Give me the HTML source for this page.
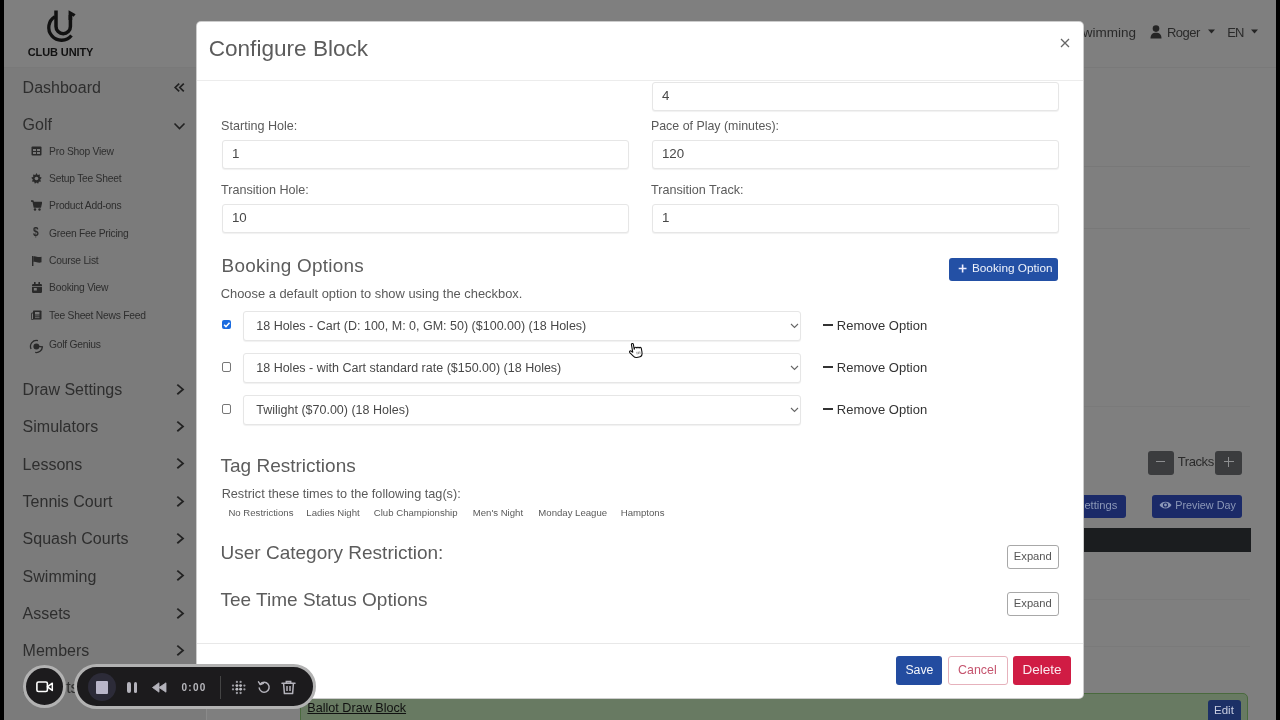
<!DOCTYPE html>
<html><head><meta charset="utf-8"><title>Configure Block</title><style>
html,body{margin:0;padding:0;width:1280px;height:720px;overflow:hidden;background:#000}
body{position:relative;font-family:"Liberation Sans",sans-serif}
.t{position:absolute;white-space:pre}
.r{position:absolute}
#root{position:absolute;left:0;top:0;width:1280px;height:720px;overflow:hidden;will-change:transform}
.inp{border:1px solid #e6e6e6;border-radius:3px;background:#fff;box-shadow:0 1px 1px rgba(0,0,0,.06)}
</style></head><body><div id="root">
<div class="r" style="left:4px;top:0;width:1272px;height:720px;background:#7f7f7f"></div>
<div class="r" style="left:4px;top:67px;width:1272px;height:1px;background:#797979"></div>
<div class="r" style="left:4px;top:68px;width:202px;height:652px;background:#7b7b7b"></div>
<div class="r" style="left:206px;top:68px;width:1px;height:652px;background:#777"></div>
<svg class="r" style="left:40px;top:5px" width="40" height="40" viewBox="40 5 40 40">
<path d="M54.93 16.57 A12.75 12.75 0 1 0 71.48 35.44" fill="none" stroke="#111" stroke-width="3.3"/>
<path d="M56 10.6 V26.5 A7.2 7.2 0 0 0 70.4 26.5 V15" fill="none" stroke="#111" stroke-width="3.5"/>
<path d="M68.6 10.3 L75.6 14.2 L73.6 16.8 L72.2 15.8 L72.2 20 L68.6 20 Z" fill="#111"/>
</svg>
<div class="t" style="left:27.75px;top:47.09px;font-size:11px;line-height:11px;color:#111;font-weight:700;letter-spacing:-0.1px">CLUB UNITY</div>
<div class="t" style="left:22.60px;top:80.15px;font-size:16px;line-height:16px;color:#2e2e2e;">Dashboard</div>
<div class="t" style="left:22.60px;top:117.15px;font-size:16px;line-height:16px;color:#2e2e2e;">Golf</div>
<svg class="r" style="left:173px;top:82px" width="13" height="11" viewBox="0 0 13 11">
<path d="M6.2 1.6 L2.2 5.5 L6.2 9.4 M10.8 1.6 L6.8 5.5 L10.8 9.4" fill="none" stroke="#222" stroke-width="1.7"/></svg>
<svg class="r" style="left:173px;top:121px" width="13" height="10" viewBox="0 0 13 10">
<path d="M1.5 2.5 L6.5 7.5 L11.5 2.5" fill="none" stroke="#222" stroke-width="1.6"/></svg>
<div class="t" style="left:49.09px;top:146.58px;font-size:10.3px;line-height:10.3px;color:#2e2e2e;letter-spacing:-0.25px">Pro Shop View</div>
<div class="t" style="left:49.09px;top:173.93px;font-size:10.3px;line-height:10.3px;color:#2e2e2e;letter-spacing:-0.25px">Setup Tee Sheet</div>
<div class="t" style="left:49.09px;top:201.28px;font-size:10.3px;line-height:10.3px;color:#2e2e2e;letter-spacing:-0.25px">Product Add-ons</div>
<div class="t" style="left:49.09px;top:228.63px;font-size:10.3px;line-height:10.3px;color:#2e2e2e;letter-spacing:-0.25px">Green Fee Pricing</div>
<div class="t" style="left:49.09px;top:255.98px;font-size:10.3px;line-height:10.3px;color:#2e2e2e;letter-spacing:-0.25px">Course List</div>
<div class="t" style="left:49.09px;top:283.33px;font-size:10.3px;line-height:10.3px;color:#2e2e2e;letter-spacing:-0.25px">Booking View</div>
<div class="t" style="left:49.09px;top:310.68px;font-size:10.3px;line-height:10.3px;color:#2e2e2e;letter-spacing:-0.25px">Tee Sheet News Feed</div>
<div class="t" style="left:49.09px;top:340.48px;font-size:10.3px;line-height:10.3px;color:#2e2e2e;letter-spacing:-0.25px">Golf Genius</div>
<svg class="r" style="left:31px;top:146px" width="11" height="10" viewBox="0 0 11 10"><rect x="0.5" y="0.5" width="10" height="9" rx="1" fill="#2a2a2a"/><rect x="2" y="3" width="3" height="2" fill="#7b7b7b"/><rect x="6" y="3" width="3" height="2" fill="#7b7b7b"/><rect x="2" y="6" width="3" height="2" fill="#7b7b7b"/><rect x="6" y="6" width="3" height="2" fill="#7b7b7b"/></svg>
<svg class="r" style="left:31px;top:173px" width="11" height="11" viewBox="0 0 24 24"><path fill="#2a2a2a" d="M12 0 L14.5 4.2 L19.5 3.2 L19 8 L23.5 10.5 L20 14 L22 18.5 L17.2 19 L15.5 23.5 L12 20.5 L8.5 23.5 L6.8 19 L2 18.5 L4 14 L0.5 10.5 L5 8 L4.5 3.2 L9.5 4.2 Z"/><circle cx="12" cy="12" r="4" fill="#7b7b7b"/></svg>
<svg class="r" style="left:31px;top:200px" width="11" height="11" viewBox="0 0 11 11"><path d="M0 1 H2 L3.2 7 H9.5 L10.5 2.5 H2.5" fill="#2a2a2a" stroke="#2a2a2a" stroke-width="1.3" stroke-linejoin="round"/><circle cx="4" cy="9.5" r="1.2" fill="#2a2a2a"/><circle cx="8.5" cy="9.5" r="1.2" fill="#2a2a2a"/></svg>
<div class="t" style="left:33.40px;top:226.34px;font-size:12px;line-height:12px;color:#2a2a2a;font-weight:700;transform:scaleX(.85);transform-origin:0 0">$</div>
<svg class="r" style="left:32px;top:256px" width="10" height="10" viewBox="0 0 10 10"><path d="M0.7 0 V10" stroke="#2a2a2a" stroke-width="1.4"/><path d="M1.4 0.5 C4 -0.5 5.5 2 9.5 0.7 V6.3 C5.5 7.5 4 5 1.4 6 Z" fill="#2a2a2a"/></svg>
<svg class="r" style="left:32px;top:282px" width="10" height="11" viewBox="0 0 10 11"><rect x="0" y="2" width="10" height="9" rx="1.2" fill="#2a2a2a"/><rect x="2" y="0" width="1.6" height="3" fill="#2a2a2a"/><rect x="6.4" y="0" width="1.6" height="3" fill="#2a2a2a"/><rect x="0" y="4" width="10" height="0.8" fill="#7b7b7b"/><rect x="1.8" y="6" width="3" height="2.5" fill="#7b7b7b"/></svg>
<svg class="r" style="left:31px;top:310px" width="11" height="10" viewBox="0 0 11 10"><rect x="2" y="0.5" width="8.5" height="9" rx="0.8" fill="#2a2a2a"/><rect x="0.3" y="3" width="2.2" height="6.5" rx="0.8" fill="none" stroke="#2a2a2a" stroke-width="1"/><rect x="4" y="2" width="4.5" height="2.5" fill="#7b7b7b"/><rect x="4" y="5.5" width="4.5" height="0.8" fill="#7b7b7b"/><rect x="4" y="7.3" width="4.5" height="0.8" fill="#7b7b7b"/></svg>
<svg class="r" style="left:26px;top:334px" width="20" height="22" viewBox="26 334 20 22"><path d="M37.95 340.68 A6 6 0 0 0 31.06 349.04" fill="none" stroke="#2a2a2a" stroke-width="1.3"/><circle cx="36.4" cy="346.5" r="3" fill="#2a2a2a"/><path d="M38.5 346.4 L42.4 346.9 A6 6 0 0 1 35.2 352.4" fill="none" stroke="#2a2a2a" stroke-width="1.3"/></svg>
<div class="t" style="left:22.60px;top:382.05px;font-size:16px;line-height:16px;color:#2e2e2e;">Draw Settings</div>
<svg class="r" style="left:175px;top:382.7px" width="10" height="13" viewBox="0 0 10 13"><path d="M2.3 1.6 L8 6.4 L2.3 11.2" fill="none" stroke="#222" stroke-width="1.8"/></svg>
<div class="t" style="left:22.60px;top:419.35px;font-size:16px;line-height:16px;color:#2e2e2e;">Simulators</div>
<svg class="r" style="left:175px;top:420.0px" width="10" height="13" viewBox="0 0 10 13"><path d="M2.3 1.6 L8 6.4 L2.3 11.2" fill="none" stroke="#222" stroke-width="1.8"/></svg>
<div class="t" style="left:22.60px;top:456.65px;font-size:16px;line-height:16px;color:#2e2e2e;">Lessons</div>
<svg class="r" style="left:175px;top:457.3px" width="10" height="13" viewBox="0 0 10 13"><path d="M2.3 1.6 L8 6.4 L2.3 11.2" fill="none" stroke="#222" stroke-width="1.8"/></svg>
<div class="t" style="left:22.60px;top:493.95px;font-size:16px;line-height:16px;color:#2e2e2e;">Tennis Court</div>
<svg class="r" style="left:175px;top:494.6px" width="10" height="13" viewBox="0 0 10 13"><path d="M2.3 1.6 L8 6.4 L2.3 11.2" fill="none" stroke="#222" stroke-width="1.8"/></svg>
<div class="t" style="left:22.60px;top:531.25px;font-size:16px;line-height:16px;color:#2e2e2e;">Squash Courts</div>
<svg class="r" style="left:175px;top:531.9px" width="10" height="13" viewBox="0 0 10 13"><path d="M2.3 1.6 L8 6.4 L2.3 11.2" fill="none" stroke="#222" stroke-width="1.8"/></svg>
<div class="t" style="left:22.60px;top:568.55px;font-size:16px;line-height:16px;color:#2e2e2e;">Swimming</div>
<svg class="r" style="left:175px;top:569.2px" width="10" height="13" viewBox="0 0 10 13"><path d="M2.3 1.6 L8 6.4 L2.3 11.2" fill="none" stroke="#222" stroke-width="1.8"/></svg>
<div class="t" style="left:22.60px;top:605.85px;font-size:16px;line-height:16px;color:#2e2e2e;">Assets</div>
<svg class="r" style="left:175px;top:606.5px" width="10" height="13" viewBox="0 0 10 13"><path d="M2.3 1.6 L8 6.4 L2.3 11.2" fill="none" stroke="#222" stroke-width="1.8"/></svg>
<div class="t" style="left:22.60px;top:643.15px;font-size:16px;line-height:16px;color:#2e2e2e;">Members</div>
<svg class="r" style="left:175px;top:643.8px" width="10" height="13" viewBox="0 0 10 13"><path d="M2.3 1.6 L8 6.4 L2.3 11.2" fill="none" stroke="#222" stroke-width="1.8"/></svg>
<div class="t" style="left:22.60px;top:680.45px;font-size:16px;line-height:16px;color:#2e2e2e;">Reports</div>
<div class="t" style="left:22.60px;top:720.45px;font-size:16px;line-height:16px;color:#2e2e2e;">Settings</div>
<div class="t" style="left:1073.83px;top:26.07px;font-size:13.5px;line-height:13.5px;color:#2a2a2a;">Swimming</div>
<svg class="r" style="left:1150px;top:25px" width="12" height="14" viewBox="0 0 12 14"><circle cx="6" cy="3.6" r="3.3" fill="#252525"/><path d="M0.5 13.5 C0.5 9 3 7.8 6 7.8 C9 7.8 11.5 9 11.5 13.5 Z" fill="#252525"/></svg>
<div class="t" style="left:1166.95px;top:25.99px;font-size:13px;line-height:13px;color:#2a2a2a;letter-spacing:-0.5px">Roger</div>
<svg class="r" style="left:1208px;top:29px" width="7" height="5" viewBox="0 0 7 5"><path d="M0 0.5 H7 L3.5 4.5 Z" fill="#252525"/></svg>
<div class="t" style="left:1227.25px;top:25.99px;font-size:13px;line-height:13px;color:#2a2a2a;letter-spacing:-1px">EN</div>
<svg class="r" style="left:1251px;top:29px" width="7" height="5" viewBox="0 0 7 5"><path d="M0 0.5 H7 L3.5 4.5 Z" fill="#252525"/></svg>
<div class="r" style="left:1083px;top:166px;width:167px;height:1px;background:#787878"></div>
<div class="r" style="left:1083px;top:228px;width:167px;height:1px;background:#787878"></div>
<div class="r" style="left:1083px;top:406px;width:167px;height:1px;background:#7a7a7a"></div>
<div class="r" style="left:1083px;top:599px;width:167px;height:1px;background:#7a7a7a"></div>
<div class="r" style="left:1083px;top:646px;width:167px;height:1px;background:#7a7a7a"></div>
<div class="r" style="left:206px;top:698px;width:1px;height:22px;background:#8a8a8a"></div>
<div class="r" style="left:1148px;top:451px;width:26px;height:24px;background:#3b3c3e;border-radius:3px"></div>
<div class="r" style="left:1156px;top:460.5px;width:9px;height:1.5px;background:#8d8e90"></div>
<div class="t" style="left:1177.65px;top:455.19px;font-size:13px;line-height:13px;color:#2b2b2b;letter-spacing:-0.4px">Tracks</div>
<div class="r" style="left:1215px;top:451px;width:27px;height:24px;background:#3b3c3e;border-radius:3px"></div>
<div class="r" style="left:1223.5px;top:460.5px;width:10px;height:1.5px;background:#8d8e90"></div>
<div class="r" style="left:1227.75px;top:456.5px;width:1.5px;height:10px;background:#8d8e90"></div>
<div class="r" style="left:1040px;top:495px;width:86px;height:23px;background:#1b2a68;border-radius:3px"></div>
<div class="t" style="left:1076.94px;top:499.72px;font-size:11.2px;line-height:11.2px;color:#8c98b8;">Settings</div>
<div class="r" style="left:1152px;top:495px;width:90px;height:23px;background:#1b2a68;border-radius:3px"></div>
<svg class="r" style="left:1159px;top:500px" width="13" height="10" viewBox="0 0 13 10"><path d="M0.5 5 C3 0.5 10 0.5 12.5 5 C10 9.5 3 9.5 0.5 5 Z" fill="#8c98b8"/><circle cx="6.5" cy="5" r="2.6" fill="#1b2a68"/><circle cx="6.5" cy="5" r="1.4" fill="#8c98b8"/></svg>
<div class="t" style="left:1175.26px;top:500.06px;font-size:10.8px;line-height:10.8px;color:#8c98b8;">Preview Day</div>
<div class="r" style="left:1000px;top:528px;width:251px;height:24px;background:#1b1d1f"></div>
<div class="r" style="left:300px;top:692.5px;width:946px;height:40px;background:#687a62;border:1.5px solid #4a6a3e;border-radius:5px"></div>
<div class="t" style="left:307.37px;top:701.73px;font-size:12.6px;line-height:12.6px;color:#111;text-decoration:underline;text-decoration-thickness:1.3px;text-underline-offset:0.6px">Ballot Draw Block</div>
<div class="r" style="left:1208px;top:700px;width:33px;height:30px;background:#1c3066;border-radius:3px"></div>
<div class="t" style="left:1214.02px;top:705.16px;font-size:11.5px;line-height:11.5px;color:#c8cde0;">Edit</div>
<div class="r" style="left:196px;top:21px;width:886px;height:676px;background:#fff;border:1px solid rgba(0,0,0,.2);border-radius:5px"></div>
<div class="t" style="left:208.67px;top:37.86px;font-size:22.6px;line-height:22.6px;color:#5c5c5c;">Configure Block</div>
<svg class="r" style="left:1060px;top:38px" width="10" height="10" viewBox="0 0 10 10"><path d="M1 1 L9 9 M9 1 L1 9" stroke="#666" stroke-width="1.3"/></svg>
<div class="r" style="left:197px;top:80px;width:886px;height:1px;background:#ececec"></div>
<div class="r inp" style="left:652px;top:82px;width:405px;height:27px"></div>
<div class="t" style="left:661.94px;top:89.44px;font-size:13.3px;line-height:13.3px;color:#484848;">4</div>
<div class="t" style="left:221.07px;top:119.53px;font-size:12.6px;line-height:12.6px;color:#5a5a5a;">Starting Hole:</div>
<div class="t" style="left:650.98px;top:119.70px;font-size:12.4px;line-height:12.4px;color:#5a5a5a;">Pace of Play (minutes):</div>
<div class="r inp" style="left:222px;top:140px;width:405px;height:27px"></div>
<div class="t" style="left:231.94px;top:147.44px;font-size:13.3px;line-height:13.3px;color:#484848;">1</div>
<div class="r inp" style="left:652px;top:140px;width:405px;height:27px"></div>
<div class="t" style="left:661.94px;top:147.44px;font-size:13.3px;line-height:13.3px;color:#484848;">120</div>
<div class="t" style="left:221.07px;top:183.83px;font-size:12.6px;line-height:12.6px;color:#5a5a5a;">Transition Hole:</div>
<div class="t" style="left:650.97px;top:183.83px;font-size:12.6px;line-height:12.6px;color:#5a5a5a;">Transition Track:</div>
<div class="r inp" style="left:222px;top:204px;width:405px;height:27px"></div>
<div class="t" style="left:231.94px;top:211.44px;font-size:13.3px;line-height:13.3px;color:#484848;">10</div>
<div class="r inp" style="left:652px;top:204px;width:405px;height:27px"></div>
<div class="t" style="left:661.94px;top:211.44px;font-size:13.3px;line-height:13.3px;color:#484848;">1</div>
<div class="t" style="left:221.56px;top:257.40px;font-size:18.9px;line-height:18.9px;color:#5c5c5c;letter-spacing:0.25px">Booking Options</div>
<div class="t" style="left:220.66px;top:288.08px;font-size:12.9px;line-height:12.9px;color:#5a5a5a;">Choose a default option to show using the checkbox.</div>
<div class="r" style="left:949px;top:258px;width:109px;height:23px;background:#2350a5;border-radius:3px"></div>
<svg class="r" style="left:957.5px;top:263.5px" width="10" height="10" viewBox="0 0 10 10"><path d="M4.6 0.6 V8.4 M0.7 4.5 H8.5" stroke="#eef" stroke-width="1.6"/></svg>
<div class="t" style="left:971.91px;top:262.81px;font-size:11.8px;line-height:11.8px;color:#eef2fb;">Booking Option</div>
<div class="r" style="left:221.7px;top:320px;width:9.4px;height:9.4px;background:#1a6be0;border-radius:2px"></div>
<svg class="r" style="left:221.7px;top:320px" width="9.4" height="9.4" viewBox="0 0 9 9"><path d="M2 4.6 L3.8 6.4 L7.2 2.6" fill="none" stroke="#fff" stroke-width="1.5"/></svg>
<div class="r inp" style="left:243px;top:311px;width:556px;height:28px"></div>
<div class="t" style="left:256.27px;top:319.62px;font-size:12.5px;line-height:12.5px;color:#484848;">18 Holes - Cart (D: 100, M: 0, GM: 50) ($100.00) (18 Holes)</div>
<svg class="r" style="left:790px;top:323px" width="9" height="6" viewBox="0 0 9 6"><path d="M1 1 L4.5 4.5 L8 1" fill="none" stroke="#666" stroke-width="1.1"/></svg>
<div class="r" style="left:823px;top:324px;width:10px;height:2px;background:#333"></div>
<div class="t" style="left:836.85px;top:318.99px;font-size:13px;line-height:13px;color:#333;">Remove Option</div>
<div class="r" style="left:221.7px;top:362px;width:7.6px;height:7.6px;border:0.9px solid #777;border-radius:2px;background:#fff"></div>
<div class="r inp" style="left:243px;top:353px;width:556px;height:28px"></div>
<div class="t" style="left:256.27px;top:361.62px;font-size:12.5px;line-height:12.5px;color:#484848;">18 Holes - with Cart standard rate ($150.00) (18 Holes)</div>
<svg class="r" style="left:790px;top:365px" width="9" height="6" viewBox="0 0 9 6"><path d="M1 1 L4.5 4.5 L8 1" fill="none" stroke="#666" stroke-width="1.1"/></svg>
<div class="r" style="left:823px;top:366px;width:10px;height:2px;background:#333"></div>
<div class="t" style="left:836.85px;top:360.99px;font-size:13px;line-height:13px;color:#333;">Remove Option</div>
<div class="r" style="left:221.7px;top:404px;width:7.6px;height:7.6px;border:0.9px solid #777;border-radius:2px;background:#fff"></div>
<div class="r inp" style="left:243px;top:395px;width:556px;height:28px"></div>
<div class="t" style="left:256.27px;top:403.62px;font-size:12.5px;line-height:12.5px;color:#484848;">Twilight ($70.00) (18 Holes)</div>
<svg class="r" style="left:790px;top:407px" width="9" height="6" viewBox="0 0 9 6"><path d="M1 1 L4.5 4.5 L8 1" fill="none" stroke="#666" stroke-width="1.1"/></svg>
<div class="r" style="left:823px;top:408px;width:10px;height:2px;background:#333"></div>
<div class="t" style="left:836.85px;top:402.99px;font-size:13px;line-height:13px;color:#333;">Remove Option</div>
<div class="t" style="left:220.55px;top:455.91px;font-size:19px;line-height:19px;color:#5c5c5c;">Tag Restrictions</div>
<div class="t" style="left:221.67px;top:487.65px;font-size:12.7px;line-height:12.7px;color:#5a5a5a;">Restrict these times to the following tag(s):</div>
<div class="t" style="left:228.42px;top:508.07px;font-size:9.6px;line-height:9.6px;color:#5a5a5a;">No Restrictions</div>
<div class="t" style="left:306.32px;top:508.07px;font-size:9.6px;line-height:9.6px;color:#5a5a5a;">Ladies Night</div>
<div class="t" style="left:373.82px;top:508.07px;font-size:9.6px;line-height:9.6px;color:#5a5a5a;">Club Championship</div>
<div class="t" style="left:472.72px;top:508.07px;font-size:9.6px;line-height:9.6px;color:#5a5a5a;">Men's Night</div>
<div class="t" style="left:538.32px;top:508.07px;font-size:9.6px;line-height:9.6px;color:#5a5a5a;">Monday League</div>
<div class="t" style="left:620.72px;top:508.07px;font-size:9.6px;line-height:9.6px;color:#5a5a5a;">Hamptons</div>
<div class="t" style="left:220.55px;top:542.91px;font-size:19px;line-height:19px;color:#5c5c5c;">User Category Restriction:</div>
<div class="t" style="left:220.55px;top:589.91px;font-size:19px;line-height:19px;color:#5c5c5c;">Tee Time Status Options</div>
<div class="r" style="left:1007px;top:545px;width:50px;height:22px;border:1px solid #a8a8a8;border-radius:3px"></div>
<div class="t" style="left:1013.84px;top:550.72px;font-size:11.2px;line-height:11.2px;color:#555;">Expand</div>
<div class="r" style="left:1007px;top:592px;width:50px;height:22px;border:1px solid #a8a8a8;border-radius:3px"></div>
<div class="t" style="left:1013.84px;top:597.72px;font-size:11.2px;line-height:11.2px;color:#555;">Expand</div>
<div class="r" style="left:197px;top:643px;width:886px;height:1px;background:#e8e8e8"></div>
<div class="r" style="left:896px;top:656px;width:46px;height:29px;background:#234ca0;border-radius:3px"></div>
<div class="t" style="left:905.38px;top:663.99px;font-size:12.3px;line-height:12.3px;color:#f4f6fb;">Save</div>
<div class="r" style="left:948px;top:656px;width:58px;height:27px;border:1px solid #e6b2bc;border-radius:3px"></div>
<div class="t" style="left:958.08px;top:663.90px;font-size:12.4px;line-height:12.4px;color:#c5546e;">Cancel</div>
<div class="r" style="left:1013px;top:656px;width:58px;height:29px;background:#d01c44;border-radius:3px"></div>
<div class="t" style="left:1022.62px;top:662.97px;font-size:13.5px;line-height:13.5px;color:#fbe9ee;">Delete</div>
<svg class="r" style="left:628px;top:342px;transform:rotate(-10deg)" width="16" height="17" viewBox="0 0 16 17"><path d="M4.5 2 C4.5 0.6 6.5 0.6 6.5 2 V7 L7 6 C7.5 5 9 5 9.3 6.2 C9.8 5.3 11.2 5.4 11.5 6.5 C12 5.8 13.6 6 13.6 7.3 V11 C13.6 13.5 12.5 15.5 10 15.5 H7.5 C6 15.5 5.2 14.8 4.4 13.6 L1.5 9.4 C0.9 8.4 2.2 7.4 3 8.2 L4.5 9.6 Z" fill="#fff" stroke="#111" stroke-width="1.1" stroke-linejoin="round"/><path d="M8.5 10 V12.5 M10 10 V12.5 M11.5 10 V12.5" stroke="#777" stroke-width="0.7"/></svg>
<div class="r" style="left:23px;top:665px;width:37px;height:37px;border:3px solid #b2b2b2;border-radius:50%;background:#1c1b1d"></div>
<div class="r" style="left:74px;top:664px;width:236px;height:39px;border:3px solid #b2b2b2;border-radius:24px;background:#1c1b1d"></div>
<svg class="r" style="left:36px;top:681px" width="18" height="12" viewBox="0 0 18 12"><rect x="0.9" y="1" width="10.5" height="9.5" rx="1.6" fill="none" stroke="#fff" stroke-width="1.6"/><path d="M11.4 5.8 L16.3 2.2 V9.4 Z" fill="none" stroke="#fff" stroke-width="1.5" stroke-linejoin="round"/></svg>
<div class="r" style="left:88px;top:673px;width:28px;height:28px;border-radius:50%;background:#2c2b38"></div>
<div class="r" style="left:96px;top:681px;width:12px;height:12.5px;background:#b9b6c9;border-radius:1px"></div>
<div class="r" style="left:127px;top:682px;width:3.7px;height:10.8px;background:#b4b3bb;border-radius:2px"></div>
<div class="r" style="left:133.5px;top:682px;width:3.7px;height:10.8px;background:#b4b3bb;border-radius:2px"></div>
<svg class="r" style="left:152px;top:682px" width="15" height="11" viewBox="0 0 15 11"><path d="M0.5 5.5 L7 0.8 V10.2 Z M7 5.5 L14 0.8 V10.2 Z" fill="#b4b3bb" stroke="#b4b3bb" stroke-width="0.8" stroke-linejoin="round"/></svg>
<div class="t" style="left:181.50px;top:682.73px;font-size:10px;line-height:10px;color:#b8b8bd;letter-spacing:1.3px;font-weight:700">0:00</div>
<div class="r" style="left:219.5px;top:676px;width:1px;height:23px;background:#444"></div>
<svg class="r" style="left:231px;top:680px" width="16" height="16" viewBox="0 0 16 16"><circle cx="2.00" cy="5.60" r="1.15" fill="#9a9aa0"/><circle cx="2.00" cy="9.30" r="1.15" fill="#9a9aa0"/><circle cx="5.90" cy="1.90" r="1.15" fill="#9a9aa0"/><circle cx="5.90" cy="5.60" r="1.45" fill="#bdbdc2"/><circle cx="5.90" cy="9.30" r="1.45" fill="#bdbdc2"/><circle cx="5.90" cy="13.00" r="1.15" fill="#9a9aa0"/><circle cx="9.60" cy="1.90" r="1.15" fill="#9a9aa0"/><circle cx="9.60" cy="5.60" r="1.45" fill="#bdbdc2"/><circle cx="9.60" cy="9.30" r="1.45" fill="#bdbdc2"/><circle cx="9.60" cy="13.00" r="1.15" fill="#9a9aa0"/><circle cx="13.40" cy="5.60" r="1.15" fill="#9a9aa0"/><circle cx="13.40" cy="9.30" r="1.15" fill="#9a9aa0"/></svg>
<svg class="r" style="left:257px;top:680px" width="14" height="14" viewBox="0 0 14 14"><path d="M3.2 4.2 A5 5 0 1 1 2.2 8" fill="none" stroke="#b4b3bb" stroke-width="1.5" stroke-linecap="round"/><path d="M1.5 1.8 L3.4 4.6 L6.4 3.4" fill="none" stroke="#b4b3bb" stroke-width="1.5" stroke-linecap="round" stroke-linejoin="round"/></svg>
<svg class="r" style="left:281px;top:680px" width="15" height="15" viewBox="0 0 15 15"><path d="M1 3.2 H14 M5.3 3 V1.5 H9.7 V3" fill="none" stroke="#b4b3bb" stroke-width="1.5" stroke-linecap="round"/><path d="M2.6 3.5 L3.4 13.6 H11.6 L12.4 3.5" fill="none" stroke="#b4b3bb" stroke-width="1.5" stroke-linejoin="round"/><path d="M6 6 V11 M9 6 V11" stroke="#b4b3bb" stroke-width="1.5"/></svg>
</div></body></html>
